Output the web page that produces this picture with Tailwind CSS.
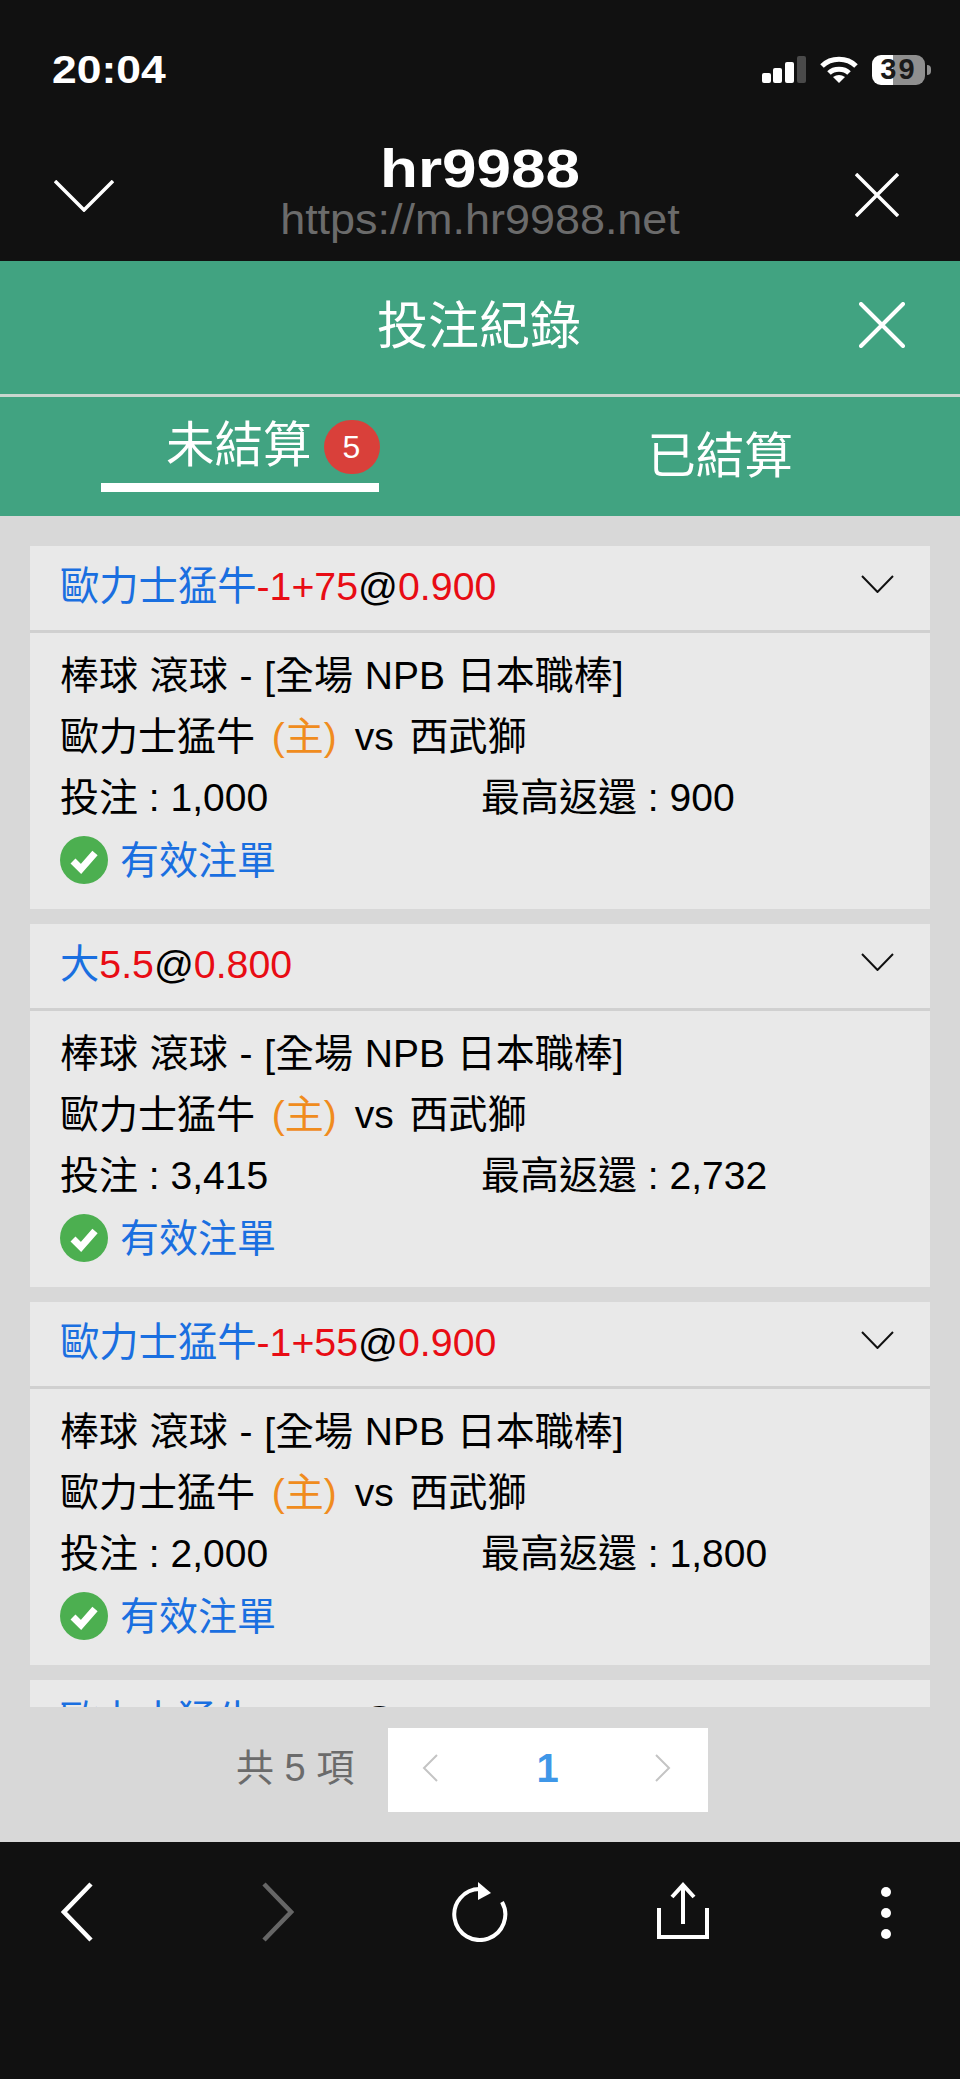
<!DOCTYPE html>
<html lang="zh-Hant">
<head>
    <meta charset="UTF-8">
    <meta name="viewport" content="width=device-width, initial-scale=1.0">
    <title>投注紀錄</title>
    <script src="https://cdn.jsdelivr.net/npm/@tailwindcss/browser@4"></script>
</head>
<body class="w-[960px] h-[2079px] overflow-hidden flex flex-col bg-[#111111] font-['Liberation_Sans','Noto_Sans_CJK_TC',sans-serif]">

    <!-- Browser chrome -->
    <header class="h-[261px] shrink-0 bg-[#111111] text-white">
        <div class="h-[140px] flex items-center justify-between pl-[52px] pr-[29px]">
            <span class="text-[39px] font-bold origin-left scale-x-[1.14]">20:04</span>
            <div class="flex items-center gap-[14px]">
                <svg width="44" height="28" viewBox="0 0 44 28">
                    <rect x="0" y="17" width="9" height="10" rx="2" fill="#fff"/>
                    <rect x="11" y="12" width="9" height="15" rx="2" fill="#fff"/>
                    <rect x="23" y="6" width="9" height="21" rx="2" fill="#fff"/>
                    <rect x="35" y="0" width="9" height="27" rx="2" fill="#4a4a4a"/>
                </svg>
                <svg width="38" height="28" viewBox="0 0 38 28" fill="none" stroke="#fff" stroke-width="5">
                    <path d="M2 10 C11 1 27 1 36 10"/>
                    <path d="M9 17 C14 12 24 12 29 17"/>
                    <path d="M19 27 L13 21 Q19 17 25 21 Z" fill="#fff" stroke="none"/>
                </svg>
                <div class="flex items-center gap-[2px]">
                    <div class="w-[53px] h-[30px] rounded-[9px] bg-[linear-gradient(90deg,#ffffff_40%,#8f8f8f_40%)] flex items-center justify-center text-[#1a1a1a] text-[29px] font-bold tracking-[2px]">39</div>
                    <div class="w-[4px] h-[10px] rounded-r-full bg-[#8f8f8f]"></div>
                </div>
            </div>
        </div>
        <div class="h-[120px] flex items-start">
            <div class="w-[150px] pl-[54px] pt-[40px]">
                <svg width="60" height="32" viewBox="0 0 60 32" fill="none" stroke="#fff" stroke-width="3.5"><path d="M1 1 L30 30 L59 1"/></svg>
            </div>
            <div class="flex-1 text-center pt-[3px]">
                <div class="text-[53px] leading-[52px] font-bold scale-x-[1.17]">hr9988</div>
                <div class="text-[42px] leading-[50px] text-[#6b6b6b] scale-x-[1.07]">https://m.hr9988.net</div>
            </div>
            <div class="w-[150px] pl-[45px] pt-[33px]">
                <svg width="44" height="44" viewBox="0 0 44 44" fill="none" stroke="#fff" stroke-width="3.5"><path d="M1 1 L43 43 M43 1 L1 43"/></svg>
            </div>
        </div>
    </header>

    <!-- Title + tabs -->
    <div class="bg-[#41a381] text-white shrink-0">
        <div class="h-[133px] flex items-center justify-center relative">
            <h1 class="text-[51px] font-normal pr-[2px]">投注紀錄</h1>
            <svg class="absolute right-[55px] top-[41px]" width="46" height="46" viewBox="0 0 46 46" fill="none" stroke="#fff" stroke-width="4" stroke-linecap="round"><path d="M2 2 L44 44 M44 2 L2 44"/></svg>
        </div>
        <div class="h-[3px] bg-[#c9d6cf]"></div>
        <div class="h-[119px] flex">
            <div class="w-1/2 pl-[101px]">
                <div class="w-[278px] h-[95px] border-b-[9px] border-white flex items-start pl-[65px] pt-[23px] gap-[12px]">
                    <span class="text-[48.500px] leading-[50px] whitespace-nowrap shrink-0">未結算</span>
                    <span class="w-[56px] h-[54px] shrink-0 rounded-full bg-[#d9403a] flex items-center justify-center text-[32px]">5</span>
                </div>
            </div>
            <div class="w-1/2 text-center pt-[34px] text-[48.500px] leading-[50px]">已結算</div>
        </div>
    </div>

    <!-- Bets -->
    <main class="h-[1326px] shrink-0 bg-[#d8d8d8] flex flex-col">
        <div class="h-[1191px] overflow-hidden px-[30px] pt-[30px] flex flex-col gap-[15px] text-[39px] text-black">

            <section class="h-[363px] shrink-0 bg-[#e9e9e9]">
                <div class="h-[87px] border-b-[3px] border-[#d0d0d0] flex items-center justify-between pl-[30px] pr-[36px] pb-[4px]">
                    <div class="leading-[50px] text-[39.300px]"><span class="text-[#1a6fe0]">歐力士猛牛</span><span class="text-[#e80c14]">-1+75</span>@<span class="text-[#e80c14]">0.900</span></div>
                    <svg class="mb-[4px]" width="33" height="18" viewBox="0 0 33 18" fill="none" stroke="#111" stroke-width="2"><path d="M1 1 L16.5 17 L32 1"/></svg>
                </div>
                <div class="pl-[30px] pt-[12px]">
                    <div class="h-[61px] leading-[61px] [word-spacing:0.900px]">棒球 滾球 - [全場 NPB 日本職棒]</div>
                    <div class="h-[61px] leading-[61px]">歐力士猛牛 <span class="text-[#f08c1e] ml-[6px] mr-[7px]">(主)</span> vs <span class="ml-[5px]">西武獅</span></div>
                    <div class="h-[61px] leading-[61px] flex"><span class="w-[421px]">投注 : 1,000</span><span>最高返還 : 900</span></div>
                    <div class="h-[61px] flex items-center gap-[12px]">
                        <svg class="mt-[2px]" width="48" height="48" viewBox="0 0 48 48"><circle cx="24" cy="24" r="24" fill="#4caf50"/><path d="M13 25 L21 33 L35 17" fill="none" stroke="#fff" stroke-width="7"/></svg>
                        <span class="text-[#1a6fe0] pt-[5px]">有效注單</span>
                    </div>
                </div>
            </section>

            <section class="h-[363px] shrink-0 bg-[#e9e9e9]">
                <div class="h-[87px] border-b-[3px] border-[#d0d0d0] flex items-center justify-between pl-[30px] pr-[36px] pb-[4px]">
                    <div class="leading-[50px] text-[39.300px]"><span class="text-[#1a6fe0]">大</span><span class="text-[#e80c14]">5.5</span>@<span class="text-[#e80c14]">0.800</span></div>
                    <svg class="mb-[4px]" width="33" height="18" viewBox="0 0 33 18" fill="none" stroke="#111" stroke-width="2"><path d="M1 1 L16.5 17 L32 1"/></svg>
                </div>
                <div class="pl-[30px] pt-[12px]">
                    <div class="h-[61px] leading-[61px] [word-spacing:0.900px]">棒球 滾球 - [全場 NPB 日本職棒]</div>
                    <div class="h-[61px] leading-[61px]">歐力士猛牛 <span class="text-[#f08c1e] ml-[6px] mr-[7px]">(主)</span> vs <span class="ml-[5px]">西武獅</span></div>
                    <div class="h-[61px] leading-[61px] flex"><span class="w-[421px]">投注 : 3,415</span><span>最高返還 : 2,732</span></div>
                    <div class="h-[61px] flex items-center gap-[12px]">
                        <svg class="mt-[2px]" width="48" height="48" viewBox="0 0 48 48"><circle cx="24" cy="24" r="24" fill="#4caf50"/><path d="M13 25 L21 33 L35 17" fill="none" stroke="#fff" stroke-width="7"/></svg>
                        <span class="text-[#1a6fe0] pt-[5px]">有效注單</span>
                    </div>
                </div>
            </section>

            <section class="h-[363px] shrink-0 bg-[#e9e9e9]">
                <div class="h-[87px] border-b-[3px] border-[#d0d0d0] flex items-center justify-between pl-[30px] pr-[36px] pb-[4px]">
                    <div class="leading-[50px] text-[39.300px]"><span class="text-[#1a6fe0]">歐力士猛牛</span><span class="text-[#e80c14]">-1+55</span>@<span class="text-[#e80c14]">0.900</span></div>
                    <svg class="mb-[4px]" width="33" height="18" viewBox="0 0 33 18" fill="none" stroke="#111" stroke-width="2"><path d="M1 1 L16.5 17 L32 1"/></svg>
                </div>
                <div class="pl-[30px] pt-[12px]">
                    <div class="h-[61px] leading-[61px] [word-spacing:0.900px]">棒球 滾球 - [全場 NPB 日本職棒]</div>
                    <div class="h-[61px] leading-[61px]">歐力士猛牛 <span class="text-[#f08c1e] ml-[6px] mr-[7px]">(主)</span> vs <span class="ml-[5px]">西武獅</span></div>
                    <div class="h-[61px] leading-[61px] flex"><span class="w-[421px]">投注 : 2,000</span><span>最高返還 : 1,800</span></div>
                    <div class="h-[61px] flex items-center gap-[12px]">
                        <svg class="mt-[2px]" width="48" height="48" viewBox="0 0 48 48"><circle cx="24" cy="24" r="24" fill="#4caf50"/><path d="M13 25 L21 33 L35 17" fill="none" stroke="#fff" stroke-width="7"/></svg>
                        <span class="text-[#1a6fe0] pt-[5px]">有效注單</span>
                    </div>
                </div>
            </section>

            <section class="h-[363px] shrink-0 bg-[#e9e9e9]">
                <div class="h-[87px] flex items-center pl-[30px] pb-[8px]">
                    <div class="leading-[50px] text-[39.300px]"><span class="text-[#1a6fe0]">歐力士猛牛</span><span class="text-[#e80c14]">-1+70</span>@<span class="text-[#e80c14]">0.900</span></div>
                </div>
            </section>
        </div>

        <!-- Pagination -->
        <div class="flex-1 flex items-start pl-[236px] pt-[21px]">
            <span class="w-[152px] h-[84px] leading-[80px] text-[38px] text-[#6b6b6b]">共 5 項</span>
            <div class="w-[320px] h-[84px] bg-white flex items-center justify-between pl-[34px] pr-[37px] pb-[5px]">
                <svg width="16" height="28" viewBox="0 0 16 28" fill="none" stroke="#c4c4c4" stroke-width="2"><path d="M15 1 L2 14 L15 27"/></svg>
                <span class="text-[40px] font-bold text-[#3f97e8] pl-[2px]">1</span>
                <svg width="16" height="28" viewBox="0 0 16 28" fill="none" stroke="#c4c4c4" stroke-width="2"><path d="M1 1 L14 14 L1 27"/></svg>
            </div>
        </div>
    </main>

    <!-- Browser toolbar -->
    <footer class="flex-1 bg-[#111111] flex justify-center items-start pt-[40px]">
        <div class="w-[202px] shrink-0 flex justify-center">
            <svg class="ml-[2px]" width="32" height="60" viewBox="0 0 32 60" fill="none" stroke="#fff" stroke-width="4.500"><path d="M30 2 L3 30 L30 58"/></svg>
        </div>
        <div class="w-[202px] shrink-0 flex justify-center">
            <svg width="32" height="60" viewBox="0 0 32 60" fill="none" stroke="#666" stroke-width="4.500"><path d="M2 2 L29 30 L2 58"/></svg>
        </div>
        <div class="w-[202px] shrink-0 flex justify-center">
            <svg width="58" height="60" viewBox="0 0 58 60" fill="none" stroke="#fff" stroke-width="4"><path d="M29 7 A 25.500 25.500 0 1 0 51 20"/><path d="M27 0 L40 11 L27 18 Z" fill="#fff" stroke="none"/></svg>
        </div>
        <div class="w-[202px] shrink-0 flex justify-center">
            <svg class="ml-[1px]" width="52" height="58" viewBox="0 0 52 58" fill="none" stroke="#fff" stroke-width="4"><path d="M2 26 V55 H50 V26"/><path d="M26 42 V3 M15 15 L26 3 L37 15"/></svg>
        </div>
        <div class="w-[202px] shrink-0 flex flex-col items-center gap-[11px] pt-[5px] pl-[3px]">
            <div class="w-[10px] h-[10px] rounded-full bg-white"></div>
            <div class="w-[10px] h-[10px] rounded-full bg-white"></div>
            <div class="w-[10px] h-[10px] rounded-full bg-white"></div>
        </div>
    </footer>
</body>
</html>
